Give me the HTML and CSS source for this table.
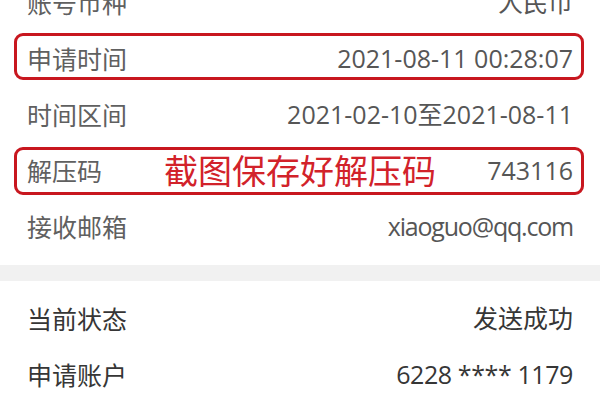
FILE: index.html
```html
<!DOCTYPE html>
<html lang="zh-CN">
<head>
<meta charset="utf-8">
<link rel="stylesheet" href="styles.css">
</head>
<body>
<div class="page">
  <section class="group group-top">
    <div class="row"><span class="label">账号币种</span><span class="value">人民币</span></div>
    <div class="row"><span class="label">申请时间</span><span class="value">2021-08-11 00:28:07</span></div>
    <div class="row"><span class="label">时间区间</span><span class="value">2021-02-10至2021-08-11</span></div>
    <div class="row"><span class="label">解压码</span><span class="value">743116</span></div>
    <div class="row"><span class="label">接收邮箱</span><span class="value value-email">xiaoguo@qq.com</span></div>
  </section>
  <div class="divider"></div>
  <section class="group group-bottom">
    <div class="row"><span class="label">当前状态</span><span class="value">发送成功</span></div>
    <div class="row"><span class="label">申请账户</span><span class="value value-card">6228 **** 1179</span></div>
  </section>
  <div class="mark mark-time"></div>
  <div class="mark mark-code"></div>
  <div class="note">截图保存好解压码</div>
</div>
</body>
</html>
```
FILE: styles.css
```css
html, body {
  margin: 0;
  padding: 0;
  background: #ffffff;
}
.page {
  position: relative;
  width: 600px;
  height: 400px;
  overflow: hidden;
  font-family: "Noto Sans CJK SC", "Noto Sans", sans-serif;
}
.group {
  display: flex;
  flex-direction: column;
  padding: 0 27px;
}
.group-top {
  margin-top: -26px;
  padding-bottom: 11px;
}
.group-bottom {
  padding-top: 9px;
}
.row {
  display: flex;
  justify-content: space-between;
  align-items: center;
  height: 56px;
  font-size: 25px;
  line-height: 1;
}
.label {
  font-family: "Noto Sans CJK SC", sans-serif;
}
.value {
  font-family: "Open Sans", "Noto Sans CJK SC", sans-serif;
}
.value-email {
  letter-spacing: -1.2px;
}
.value-card {
  letter-spacing: -0.4px;
}
.group-top .label { color: #606060; }
.group-top .value { color: #565656; }
.group-bottom .label, .group-bottom .value { color: #363636; }
.divider {
  height: 16px;
  background: #f1f1f1;
}
.mark {
  position: absolute;
  left: 14px;
  width: 564px;
  border: 3px solid #c8171f;
  border-radius: 9px;
}
.mark-time {
  top: 33px;
  height: 41px;
}
.mark-code {
  top: 147px;
  height: 42px;
}
.note {
  position: absolute;
  left: 164px;
  top: 150px;
  font-size: 34px;
  line-height: 40px;
  color: #d2222a;
}
```
